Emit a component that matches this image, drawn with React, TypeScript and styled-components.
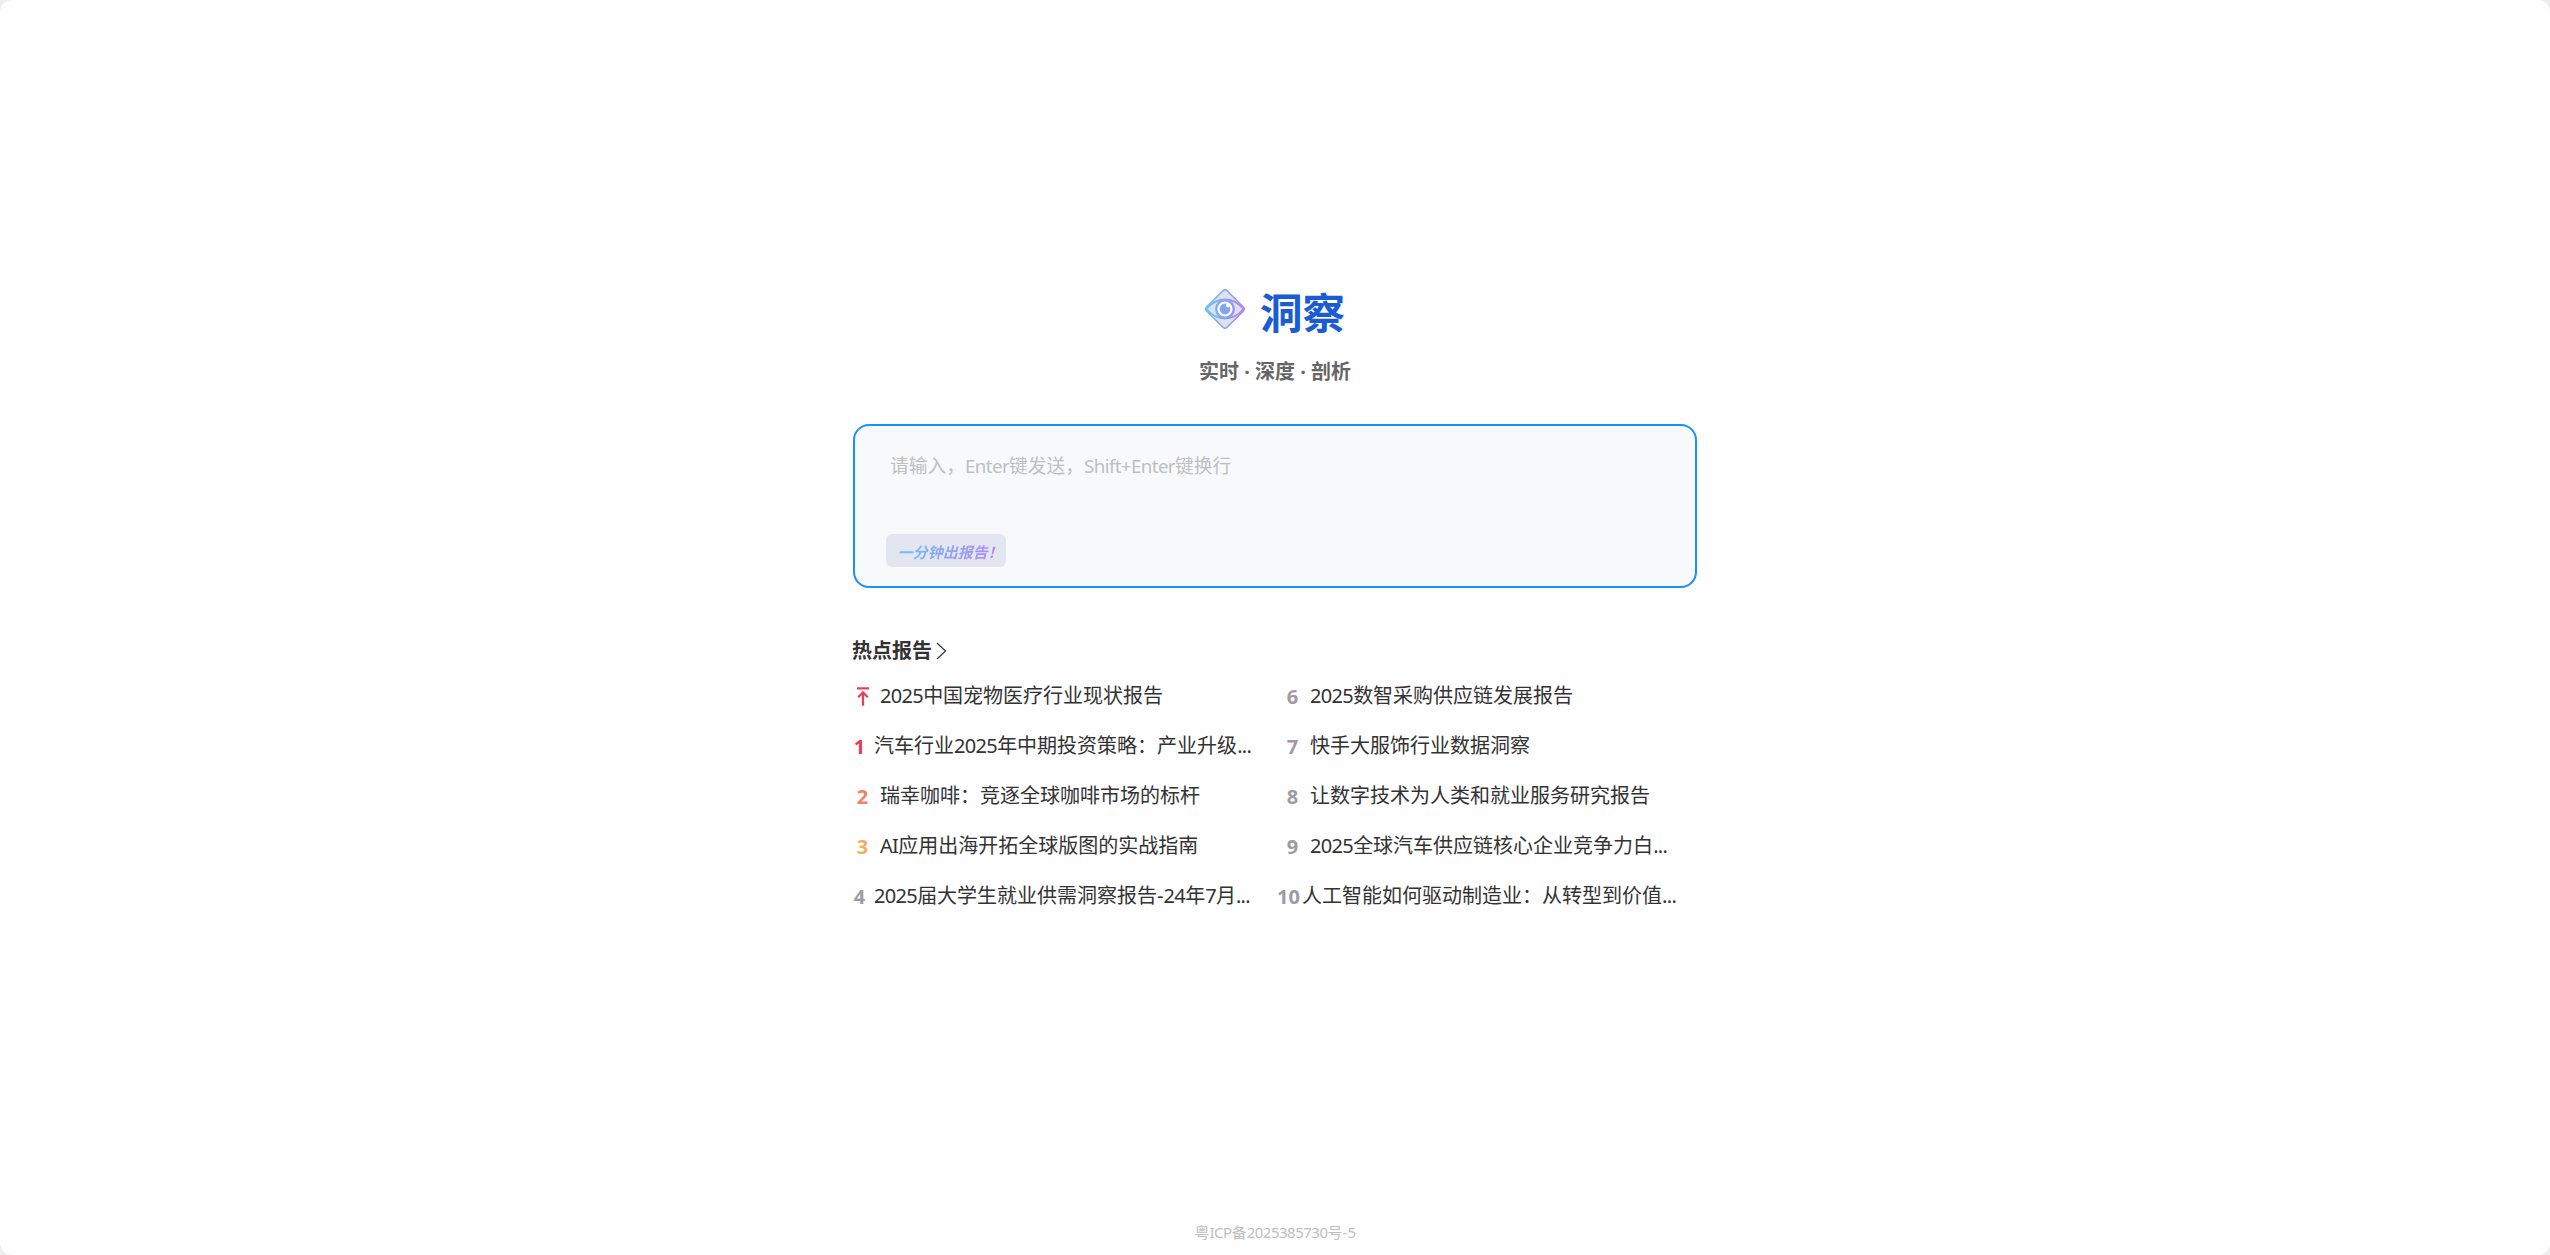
import { useState } from "react";
import styled, { createGlobalStyle } from "styled-components";

interface ReportType {
  rank: string,
  title: string,
  tone?: string,
  rankWidth?: number
}

const color = {
  primary: "#1890ff",
  title: "#1a5bd6",
  text: "#333333",
  sub: "#666666",
  placeholder: "#bfbfbf",
  rank: "#9f9aa6",
  field: "#f8f9fb",
};

const leftReports: ReportType[] = [
  { rank: "top", title: "2025中国宠物医疗行业现状报告", tone: "#e8405a" },
  { rank: "1", title: "汽车行业2025年中期投资策略：产业升级...", tone: "#e8404e", rankWidth: 15 },
  { rank: "2", title: "瑞幸咖啡：竞逐全球咖啡市场的标杆", tone: "#f0836a" },
  { rank: "3", title: "AI应用出海开拓全球版图的实战指南", tone: "#efb061" },
  { rank: "4", title: "2025届大学生就业供需洞察报告-24年7月...", rankWidth: 15 },
];

const rightReports: ReportType[] = [
  { rank: "6", title: "2025数智采购供应链发展报告" },
  { rank: "7", title: "快手大服饰行业数据洞察" },
  { rank: "8", title: "让数字技术为人类和就业服务研究报告" },
  { rank: "9", title: "2025全球汽车供应链核心企业竞争力白..." },
  { rank: "10", title: "人工智能如何驱动制造业：从转型到价值...", rankWidth: 13 },
];

// latin letters and digits are set a little tighter than the Chinese text
const MixedText = ({ text }: { text: string }) => (
  <>
    {text.split(/([A-Za-z0-9+.]+)/).map((part, i) =>
      i % 2 === 1 ? <Latin key={i}>{part}</Latin> : part
    )}
  </>
);

const LogoIcon = () => (
  <svg width="40" height="40" viewBox="0 0 40 40" fill="none">
    <defs>
      <linearGradient id="logo" x1="0" y1="20" x2="40" y2="20" gradientUnits="userSpaceOnUse">
        <stop stopColor="#69c4f4" />
        <stop offset="0.5" stopColor="#86a3ee" />
        <stop offset="1" stopColor="#b584f5" />
      </linearGradient>
    </defs>
    <path
      d="M17.9 1.7 1.7 17.9a3 3 0 0 0 0 4.2l16.2 16.2a3 3 0 0 0 4.2 0l16.2-16.2a3 3 0 0 0 0-4.2L22.1 1.7a3 3 0 0 0-4.2 0Z"
      fill="#e0e1ee"
      stroke="url(#logo)"
      strokeWidth="1.5"
    />
    <path
      d="M1.5 20C6.5 14 13 10.5 20 10.5S33.5 14 38.5 20C33.5 26 27 29.5 20 29.5S6.5 26 1.5 20Z"
      stroke="url(#logo)"
      strokeWidth="1.8"
    />
    <circle cx="20" cy="20" r="8.8" fill="#ffffff" stroke="url(#logo)" strokeWidth="2.4" />
    <circle cx="20" cy="20" r="5.4" fill="url(#logo)" />
    <circle cx="23" cy="16.6" r="2" fill="#ffffff" />
  </svg>
);

const TopIcon = () => (
  <svg width="12" height="19" viewBox="0 0 12 19" fill="none" stroke="currentColor" strokeWidth="2.2">
    <path d="M0 1.3h12M6 18.8V6M1.2 10.2 6 5.4l4.8 4.8" />
  </svg>
);

const ArrowIcon = () => (
  <svg width="11" height="18" viewBox="0 0 11 18" fill="none" stroke={color.text} strokeWidth="1.2">
    <path d="m1 1 8.5 8L1 17" />
  </svg>
);

const ReportList = ({ reports }: { reports: ReportType[] }) => (
  <List>
    {reports.map(({ rank, title, tone, rankWidth }) => (
      <ReportItem key={rank}>
        <Rank $tone={tone} $width={rankWidth}>
          {rank === "top" ? <TopIcon /> : rank}
        </Rank>
        <ReportTitle><MixedText text={title} /></ReportTitle>
      </ReportItem>
    ))}
  </List>
);

const App = () => {
  const [question, setQuestion] = useState("");

  return (
    <>
      <GlobalStyle />
      <Page>
        <Main>
          <Brand>
            <LogoIcon />
            <BrandName>洞察</BrandName>
          </Brand>
          <Slogan>实时 · 深度 · 剖析</Slogan>
          <InputBox>
            <Field>
              {question === "" && (
                <Placeholder><MixedText text="请输入，Enter键发送，Shift+Enter键换行" /></Placeholder>
              )}
              <TextArea value={question} onChange={(e) => setQuestion(e.target.value)} />
            </Field>
            <Tag><TagText>一分钟出报告！</TagText></Tag>
          </InputBox>
          <SectionTitle>
            热点报告
            <ArrowIcon />
          </SectionTitle>
          <Reports>
            <ReportList reports={leftReports} />
            <ReportList reports={rightReports} />
          </Reports>
        </Main>
        <Footer><MixedText text="粤ICP备2025385730号-5" /></Footer>
      </Page>
    </>
  )
}

export default App;

const GlobalStyle = createGlobalStyle`
  * {
    box-sizing: border-box;
    margin: 0;
    padding: 0;
  }

  body {
    background: #eeeeee;
    font-family: "Noto Sans", "Noto Sans CJK SC", sans-serif;
    color: ${color.text};
  }
`

const Page = styled.div`
  display: flex;
  flex-direction: column;
  align-items: center;
  justify-content: space-between;
  height: 100vh;
  padding: 283px 0 11px;
  border-radius: 12px;
  background: #fefefe;
  overflow: hidden;
`

const Main = styled.main`
  display: flex;
  flex-direction: column;
  width: 844px;
`

const Brand = styled.div`
  display: flex;
  justify-content: center;
  gap: 15px;
  height: 58px;
  padding-top: 6px;
`

const BrandName = styled.h1`
  font-size: 42.5px;
  line-height: 47px;
  font-weight: 700;
  color: ${color.title};
`

const Slogan = styled.p`
  margin-top: 16px;
  font-size: 20px;
  line-height: 30px;
  font-weight: 700;
  text-align: center;
  color: ${color.sub};
`

const InputBox = styled.div`
  display: flex;
  flex-direction: column;
  align-items: flex-start;
  justify-content: space-between;
  height: 164px;
  margin-top: 37px;
  padding: 24px 31px 19px;
  border: 2px solid ${color.primary};
  border-radius: 16px;
  background: ${color.field};
`

const Field = styled.div`
  display: grid;
  width: 100%;
  height: 70px;
  padding-left: 4px;
`

const Placeholder = styled.p`
  grid-area: 1 / 1;
  font-size: 18.75px;
  line-height: 32px;
  color: ${color.placeholder};
`

const TextArea = styled.textarea`
  grid-area: 1 / 1;
  border: none;
  outline: none;
  resize: none;
  background: transparent;
  font: inherit;
  font-size: 18.75px;
  line-height: 32px;
`

const Tag = styled.div`
  width: 120px;
  height: 33px;
  padding-left: 13px;
  border-radius: 6px;
  background: #e3e5f1;
`

const TagText = styled.span`
  display: inline-block;
  font-size: 15px;
  line-height: 37px;
  font-weight: 700;
  white-space: nowrap;
  color: transparent;
  background: linear-gradient(90deg, #6bc1f3, #b584f5);
  background-clip: text;
  transform: skewX(-14deg);
`

const SectionTitle = styled.h2`
  display: flex;
  align-items: center;
  gap: 4px;
  margin: 48px 0 0 -1px;
  font-size: 20px;
  line-height: 30px;
  font-weight: 700;
`

const Reports = styled.div`
  display: grid;
  grid-template-columns: 430px 1fr;
  margin: 5px -20px 0 -1px;
`

const List = styled.ul`
  list-style: none;
`

const ReportItem = styled.li`
  display: flex;
  align-items: center;
  gap: 7px;
  height: 50px;
  white-space: nowrap;
`

const Rank = styled.span<{ $tone?: string, $width?: number }>`
  display: flex;
  justify-content: center;
  flex: none;
  width: ${({ $width = 21 }) => $width}px;
  font-size: 20px;
  font-weight: 700;
  color: ${({ $tone = color.rank }) => $tone};
`

const ReportTitle = styled.span`
  font-size: 20px;
  line-height: 30px;
`

const Latin = styled.span`
  letter-spacing: -0.033em;
`

const Footer = styled.footer`
  font-size: 15px;
  line-height: 24px;
  color: ${color.placeholder};
`
